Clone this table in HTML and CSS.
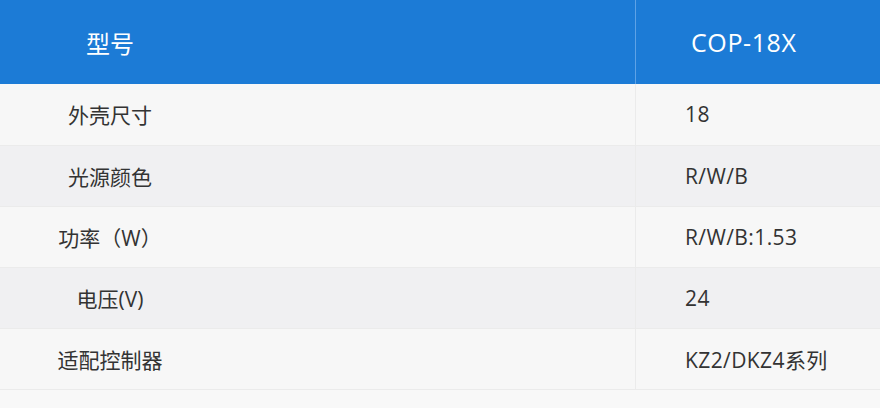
FILE: index.html
```html
<!DOCTYPE html>
<html lang="zh">
<head>
<meta charset="utf-8">
<link rel="stylesheet" href="styles.css">
</head>
<body>
<table class="spec">
  <thead>
    <tr>
      <th class="key"><span class="lbl">型号</span></th>
      <th class="val">COP-18X</th>
    </tr>
  </thead>
  <tbody>
    <tr><td class="key"><span class="lbl">外壳尺寸</span></td><td class="val">18</td></tr>
    <tr><td class="key"><span class="lbl">光源颜色</span></td><td class="val">R/W/B</td></tr>
    <tr><td class="key"><span class="lbl">功率（W）</span></td><td class="val">R/W/B:1.53</td></tr>
    <tr><td class="key"><span class="lbl">电压(V)</span></td><td class="val">24</td></tr>
    <tr><td class="key"><span class="lbl">适配控制器</span></td><td class="val">KZ2/DKZ4系列</td></tr>
  </tbody>
</table>
</body>
</html>
```
FILE: styles.css
```css
html, body {
  margin: 0;
  background: #f8f8f8;
}
body {
  font-family: "Open Sans", "Noto Sans CJK SC", sans-serif;
  color: #333333;
}
.spec {
  width: 880px;
  border-collapse: collapse;
  border-spacing: 0;
}
.spec th, .spec td {
  padding: 0;
  text-align: left;
  vertical-align: middle;
}
.spec thead tr {
  height: 84px;
  background: #1c7bd6;
}
.spec th {
  color: #ffffff;
  font-size: 24px;
  font-weight: normal;
}
.spec th.key {
  width: 635px;
  border-right: 1px solid #5ea2e6;
}
.spec th.val {
  padding-left: 55px;
  font-size: 25px;
  letter-spacing: 0.6px;
}
.spec tbody tr {
  height: 61px;
  background: #f7f7f7;
}
.spec tbody tr:nth-child(even) {
  background: #f0f0f2;
}
.spec td {
  font-size: 21px;
  border-bottom: 1px solid #ebebeb;
}
.spec td.key {
  border-right: 1px solid #ebebeb;
}
.spec td.val {
  padding-left: 49px;
  letter-spacing: 0.4px;
}
.lbl {
  display: block;
  width: 220px;
  text-align: center;
}
```
